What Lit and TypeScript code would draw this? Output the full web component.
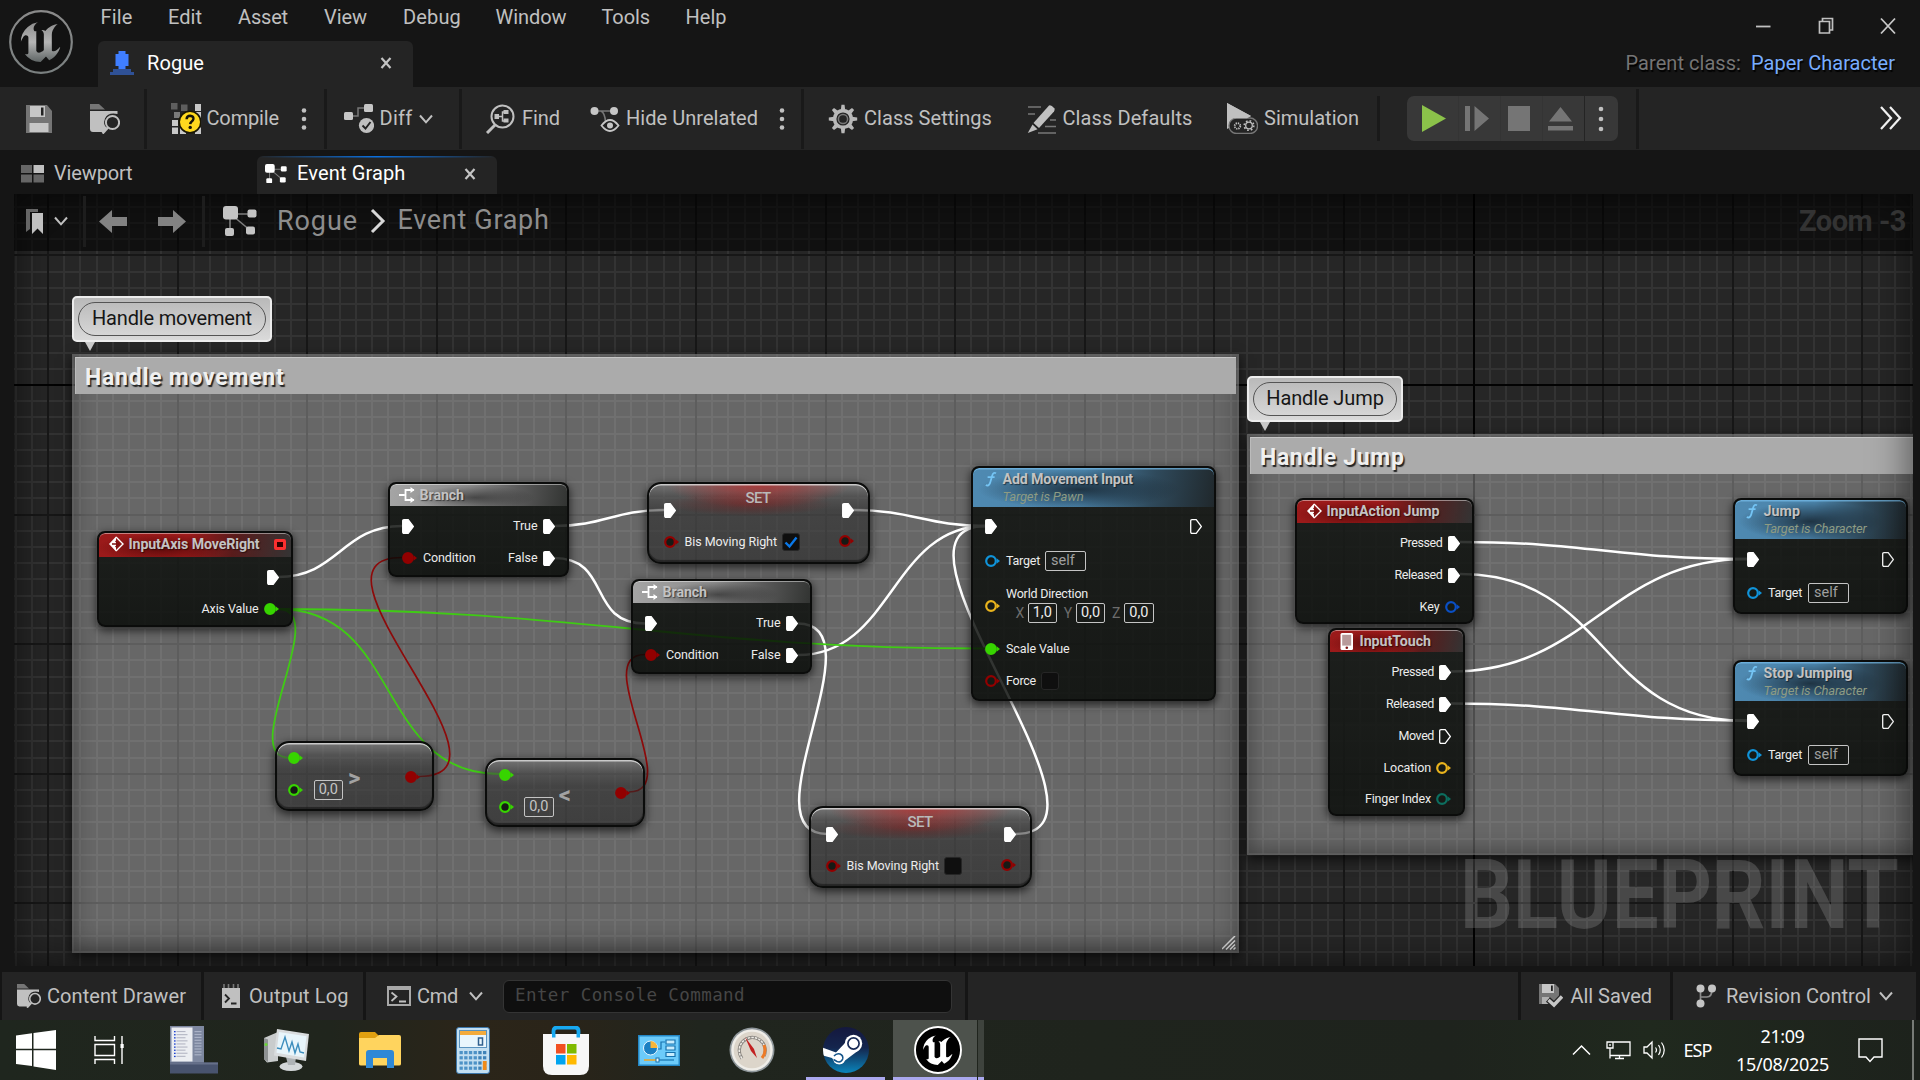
import { LitElement, html, svg, css, nothing } from "lit";
import { customElement, property } from "lit/decorators.js";

/* Text whose tracking is adjusted so that it fills a given width. */
@customElement("fit-label")
class FitLabel extends LitElement {
  @property({ type: Number }) w = 0;
  static styles = css`
    :host { display: inline-block; white-space: nowrap; flex: none; }
  `;
  render() {
    return html`<span><slot></slot></span>`;
  }
  firstUpdated() {
    this.style.width = this.w + "px";
    const span = this.renderRoot.querySelector("span") as HTMLElement;
    const n = (this.textContent || "").trim().length;
    const natural = span.getBoundingClientRect().width;
    if (n > 0 && natural > 0) span.style.letterSpacing = (this.w - natural) / n + "px";
  }
}

const L = (t: string, w: number, cls = "") => html`<fit-label class=${cls} w=${w}>${t}</fit-label>`;

/* ---------- icons ---------- */
const icon = (w: number, h: number, body: unknown, cls = "") =>
  html`<svg class="ic ${cls}" width=${w} height=${h} viewBox="0 0 ${w} ${h}">${body}</svg>`;

const U_PATH =
  "M19.13 13.729c-.206.997-1.126 3.557-4.06 4.942l-1.179-1.325-1.988 2a7.338 7.338 0 01-5.804-2.978 2.859 2.859 0 00.65.123c.326.006.678-.114.678-.66v-5.394a.89.89 0 00-1.116-.89c-.92.212-1.656 2.509-1.656 2.509a7.304 7.304 0 012.528-5.597 7.408 7.408 0 013.73-1.721c-1.006.573-1.57 1.507-1.57 2.29 0 1.262.76 1.109.984.923v7.28a1.157 1.157 0 00.148.256 1.075 1.075 0 00.88.445c.76 0 1.747-.868 1.747-.868V9.172c0-.6-.452-1.324-.905-1.572 0 0 .838-.149 1.484.346a5.537 5.537 0 01.387-.425c1.508-1.48 2.929-1.902 4.112-2.112 0 0-2.151 1.69-2.151 3.96 0 1.687.043 5.801.043 5.801.799.771 1.986-.342 3.059-1.441Z";

const engineLogo = html`<svg class="ic" width="66" height="66" viewBox="0 0 66 66">
  <defs>
    <linearGradient id="lg" x1="0" y1="0" x2="0" y2="1"><stop offset="0" stop-color="#8d8d8d"/><stop offset=".5" stop-color="#b5b5b5"/><stop offset="1" stop-color="#5f6565"/></linearGradient>
    <linearGradient id="lr" x1="0" y1="0" x2="0" y2="1"><stop offset="0" stop-color="#8a8a8a"/><stop offset="1" stop-color="#7a8080"/></linearGradient>
  </defs>
  <circle cx="33" cy="33" r="30.8" fill="#121212" stroke="url(#lr)" stroke-width="2.2"/>
  <g transform="translate(.2,.4) scale(2.72)"><path d=${U_PATH} fill="url(#lg)"/></g>
</svg>`;

const dots = (gap: number) => icon(6, 30, [-1, 0, 1].map((i) => svg`<circle cx="3" cy=${15 + i * gap} r="2.3" fill="#c0c0c0"/>`));
const chevron = icon(16, 12, svg`<path d="M2 2.5L8 9.3L14 2.5" fill="none" stroke="#c0c0c0" stroke-width="2"/>`);
const cross = icon(12, 14, svg`<path d="M1.5 2L10.5 12M10.5 2L1.5 12" stroke="#c4c4c4" stroke-width="2.2"/>`);
const save = icon(26, 28, svg`<path d="M0 0H21L26 6V28H0Z" fill="#757575"/><path d="M4 1H19V12H4Z" fill="#c6c6c6"/><path d="M15 2.500H17.500V10.500H15Z" fill="#222"/><path d="M3.500 18H22.500V27H3.500Z" fill="#c6c6c6"/>`);
const folderFind = (w: number, h: number) => html`<svg class="ic" width=${w} height=${h} viewBox="0 0 30 30">
  <path d="M0 0H9L15 5.500H0Z" fill="#757575"/><path d="M0 7H27.500V10Q18 8 15 14.500Q12.500 21 17 24L14 28H3Q0 28 0 25Z" fill="#c0c0c0"/>
  <circle cx="22.500" cy="18.500" r="6.600" fill="none" stroke="#c0c0c0" stroke-width="2"/><path d="M18 23.500L12.500 29.500" stroke="#c0c0c0" stroke-width="2.400"/></svg>`;
const compile = icon(30, 31, svg`
  <path d="M0 0H6.500V6.500H0Z" fill="#5e5e5e"/><path d="M10 1.500H16.500V8H10Z" fill="#5e5e5e"/><path d="M24 1H30V8H24Z" fill="#c8c8c8"/>
  <path d="M3 9H9V15H3Z" fill="#7a7a7a"/><path d="M24 9H30V15H24Z" fill="#c8c8c8"/><path d="M1 17H7V23H1Z" fill="#c8c8c8"/><path d="M1 24.500H7V31H1ZM9 24.500H15V31H9ZM24 24.500H30V31H24Z" fill="#c8c8c8"/>
  <circle cx="19" cy="19" r="10.800" fill="#ffd91e" stroke="#1a1704" stroke-width="1.600"/>
  <path d="M15.600 16.200Q15.800 12.800 19.200 12.800Q22.500 13 22.400 15.900Q22.200 17.600 20.500 18.700Q19.300 19.600 19.200 21.200" fill="none" stroke="#15130a" stroke-width="2.500"/><circle cx="19.200" cy="24.400" r="1.700" fill="#15130a"/>`);
const diff = icon(30, 31, svg`
  <path d="M8 13H14V5H21" fill="none" stroke="#777" stroke-width="1.500"/><rect x="0" y="9" width="9" height="8" rx="1.500" fill="#c6c6c6"/><rect x="20" y="1" width="9" height="8" rx="1.500" fill="#c6c6c6"/>
  <circle cx="22.500" cy="22.500" r="7.600" fill="#c0c0c0"/><path d="M18.500 22.500L21.500 25.500L26.500 19" fill="none" stroke="#222" stroke-width="1.900"/>`);
const find = icon(30, 30, svg`
  <circle cx="17.500" cy="12.500" r="11" fill="none" stroke="#c0c0c0" stroke-width="2"/><path d="M10 21L2 29" stroke="#c0c0c0" stroke-width="3"/>
  <rect x="9.500" y="10" width="4.500" height="5" fill="#c0c0c0"/><path d="M13 12.500H17.500M23 8H17.500V17H23" fill="none" stroke="#c0c0c0" stroke-width="1.500"/><rect x="18.500" y="6" width="5" height="4" fill="#c0c0c0"/><rect x="18.500" y="14.500" width="5" height="4" fill="#c0c0c0"/>`);
const hide = icon(30, 28, svg`
  <path d="M4 6H24M11 6Q15 8 15.500 17" fill="none" stroke="#777" stroke-width="1.600"/><circle cx="4.500" cy="6" r="4" fill="#c6c6c6"/><circle cx="24" cy="6" r="4" fill="#c6c6c6"/>
  <path d="M11.500 20.500Q20 9.500 28.500 20.500Q20 31.500 11.500 20.500Z" fill="#222" stroke="#c6c6c6" stroke-width="1.800"/><circle cx="20" cy="20.500" r="3" fill="#c6c6c6"/>`);
const gear = icon(30, 30, svg`
  ${[0, 45, 90, 135, 180, 225, 270, 315].map((a) => svg`<path d="M12.800 6L13.500 .8H16.500L17.200 6Z" fill="#b8b8b8" transform="rotate(${a} 15 15)"/>`)}
  <circle cx="15" cy="15" r="8.400" fill="none" stroke="#b8b8b8" stroke-width="3.600"/><circle cx="15" cy="15" r="4.600" fill="none" stroke="#777" stroke-width="1.500"/>`);
const pencil = icon(30, 30, svg`
  <path d="M1 3H14M1 10H8M23 16H29M18 22.500H29M11 29H29" stroke="#777" stroke-width="1.500"/>
  <path d="M22 1.500Q24 .5 27.500 4.500Q28 6 27 7.500L12 24L6.500 19Z" fill="#c0c0c0"/><path d="M5.500 20.500L10.500 25.200L.8 29Z" fill="#c0c0c0"/>`);
const simulate = icon(31, 31, svg`
  <path d="M0 0L24 13L0 26Z" fill="#c0c0c0"/><rect x="2" y="15" width="28.500" height="15.500" rx="7.500" fill="#242424" stroke="#777" stroke-width="1.400"/>
  <path d="M0 0L24 13L20 15.200H6L1 19L0 22Z" fill="#c0c0c0"/>
  <circle cx="10.500" cy="23" r="2.800" fill="none" stroke="#c0c0c0" stroke-width="1.800" stroke-dasharray="1.300 .9"/><circle cx="22" cy="22.500" r="3.300" fill="none" stroke="#c0c0c0" stroke-width="1.300"/><circle cx="22" cy="22.500" r="4.800" fill="none" stroke="#c0c0c0" stroke-width="1.600" stroke-dasharray="1.700 2.070"/>`);
const graphIcon = (s: number, c: string) => html`<svg class="ic" width=${s} height=${s * 0.9} viewBox="0 0 34 30.600">
  <path d="M8 8H28M7 10V26M10 10L28 25" stroke="#7d7d7d" stroke-width="1.600"/><rect x="0" y="0" width="15" height="13.500" rx="3" fill=${c}/><rect x="24.500" y="3.500" width="9" height="8" rx="2" fill=${c}/><rect x="2" y="22" width="9" height="8" rx="2" fill=${c}/><rect x="23" y="20.500" width="9" height="8" rx="2" fill=${c}/></svg>`;

/* ---------- node data ---------- */
type Pin = { kind: "exec" | "data" | "none"; color?: string; filled?: boolean; label?: string; w?: number; h?: number; extra?: unknown };
type Node = { x: number; y: number; w: number; h: number; style: string; title: string; tw: number; sub?: string; sw?: number; glyph?: string; head?: number; left: Pin[]; right: Pin[]; delegate?: boolean };

const RED = "#920000", GREEN = "#37d400", CYAN = "#1093d9", GOLD = "#e9b31d";

const check = (on: boolean) => html`<span class="check">${on ? icon(16, 16, svg`<path d="M2.500 8.500L6.500 12.500L13.500 3.500" fill="none" stroke="#0a78e8" stroke-width="2.400"/>`) : nothing}</span>`;
const self = html`<span class="box self">self</span>`;
const num = (v: string) => html`<span class="box num">${v}</span>`;
const E: Pin = { kind: "exec", filled: true };
const out = (label: string, w: number, filled = true): Pin => ({ kind: "exec", filled, label, w });
const target: Pin = { kind: "data", color: CYAN, label: "Target", w: 34, h: 36, extra: self };
const setNode = (x: number, y: number, on: boolean): Node => ({
  x, y, w: 223, h: 81.5, style: "compact set", title: "SET", tw: 25,
  left: [E, { kind: "data", color: RED, label: "Bis Moving Right", w: 92.5, extra: check(on) }],
  right: [E, { kind: "data", color: RED, h: 29 }],
});
const branch = (x: number, y: number): Node => ({
  x, y, w: 181, h: 95, style: "flow", title: "Branch", tw: 44.5, glyph: "branch", head: 24,
  left: [E, { kind: "data", color: RED, filled: true, label: "Condition", w: 52.5 }],
  right: [out("True", 24.5), out("False", 29.5)],
});

const nodes: Node[] = [
  { x: 96.5, y: 531, w: 196, h: 96, style: "event", title: "InputAxis MoveRight", tw: 131, glyph: "event", head: 26, delegate: true, left: [], right: [E, { kind: "data", color: GREEN, filled: true, label: "Axis Value", w: 57 }] },
  branch(387.5, 482), branch(630.5, 579),
  setNode(646.500, 482, true), setNode(808.5, 806, false),
  {
    x: 970.5, y: 466, w: 245, h: 235, style: "func wide", title: "Add Movement Input", tw: 130.500, sub: "Target is Pawn", sw: 81, glyph: "f", head: 40.500,
    left: [E, { ...target, h: 37 },
      { kind: "data", color: GOLD, h: 53, extra: html`<span class="vec">${L("World Direction", 82)}<span class="vrow"><i>X</i>${num("1,0")}<i>Y</i>${num("0,0")}<i>Z</i>${num("0,0")}</span></span>` },
      { kind: "data", color: GREEN, filled: true, label: "Scale Value", w: 63.500 },
      { kind: "data", color: RED, label: "Force", w: 30, extra: check(false) }],
    right: [out("", 0, false)],
  },
  { x: 274.5, y: 741, w: 159.500, h: 69.500, style: "compact op", title: ">", tw: 0, left: [{ kind: "data", color: GREEN, filled: true }, { kind: "data", color: GREEN, extra: num("0,0") }], right: [{ kind: "data", color: RED, filled: true }] },
  { x: 485, y: 757.500, w: 159.500, h: 69, style: "compact op", title: "<", tw: 0, left: [{ kind: "data", color: GREEN, filled: true }, { kind: "data", color: GREEN, extra: num("0,0") }], right: [{ kind: "data", color: RED, filled: true }] },
  { x: 1294.500, y: 498, w: 179, h: 126, style: "event", title: "InputAction Jump", tw: 113, glyph: "event", head: 25, left: [], right: [out("Pressed", 42.500), out("Released", 48), { kind: "data", color: "#0a4fc4", label: "Key", w: 20 }] },
  { x: 1327.500, y: 628, w: 137.500, h: 188, style: "event", title: "InputTouch", tw: 71.500, glyph: "phone", head: 24, left: [], right: [out("Pressed", 42.500), out("Released", 48), out("Moved", 35.500, false), { kind: "data", color: GOLD, label: "Location", w: 47.500 }, { kind: "data", color: "#0c6e5f", label: "Finger Index", w: 66, h: 29 }] },
  { x: 1732.500, y: 498, w: 175.500, h: 116, style: "func", title: "Jump", tw: 36.500, sub: "Target is Character", sw: 103, glyph: "f", head: 41, left: [E, target], right: [out("", 0, false)] },
  { x: 1732.500, y: 660, w: 175.500, h: 116, style: "func", title: "Stop Jumping", tw: 89, sub: "Target is Character", sw: 103, glyph: "f", head: 41, left: [E, target], right: [out("", 0, false)] },
];

/* from x, from y, to x, to y, tangent length, colour class */
const wires: [number, number, number, number, number, string][] = [
  [278, 577, 402, 526, 60, "w"], [554, 526, 664, 510, 50, "w"], [554, 558, 645, 623.500, 58, "w"],
  [853, 510, 986, 526, 60, "w"], [798, 655, 986, 526, 95, "w"], [798, 623.500, 827, 834, 83, "w"], [1015, 834, 986, 526, 123, "w"],
  [278, 609, 986, 648.500, 300, "g"], [278, 609, 290, 758, 55, "g"], [278, 609, 500, 774, 125, "g"],
  [419, 776.500, 402, 557.500, 113, "r"], [629, 792, 645, 654.500, 57, "r"],
  [1460, 542, 1747, 559, 130, "w"], [1460, 574, 1747, 721, 150, "w"], [1451, 671.500, 1747, 559, 138, "w"], [1451, 703.500, 1747, 720.500, 130, "w"],
];

const STEP = 16.2, OX = 1473.6, OY = 385;
const gridLines = () => {
  const minor: unknown[] = [], major: unknown[] = [];
  for (let i = -91; i <= 28; i++) {
    const x = Math.round(OX + i * STEP) - 1, m = i % 8 === 0;
    (m ? major : minor).push(svg`<rect class=${i === 0 ? "ax" : m ? "mj" : "mn"} x=${x} y="190" width="2" height="780"/>`);
  }
  for (let i = -12; i <= 36; i++) {
    const y = Math.round(OY + i * STEP) - 1, m = i % 8 === 0;
    (m ? major : minor).push(svg`<rect class=${i === 0 ? "ax" : m ? "mj" : "mn"} x="10" y=${y} width="1910" height="2"/>`);
  }
  return [minor, major];
};

const pinShape = (p: Pin) =>
  p.kind === "exec"
    ? html`<svg class="ic" width="12" height="15" viewBox="0 0 12 15"><path d="M.7 2Q.7 .7 2 .7H6.200L11.400 7.500L6.200 14.300H2Q.7 14.300 .7 13Z" fill=${p.filled ? "#fff" : "none"} stroke="#fff" stroke-width="1.300"/></svg>`
    : html`<svg class="ic" width="15" height="14" viewBox="0 0 15 14"><circle cx="6" cy="7" r="4.800" fill=${p.filled ? p.color : "#161a15"} stroke=${p.color} stroke-width="2.200"/><path d="M11.600 4.200L15 7L11.600 9.800Z" fill=${p.color}/></svg>`;

const glyphs: Record<string, unknown> = {
  event: icon(16, 16, svg`<path d="M8 .5L1 8L8 15.500Z" fill="#fff"/><path d="M8 1L15 8L8 15" fill="none" stroke="#fff" stroke-width="1.400"/><path d="M4 8H9M7.500 5L10.800 8L7.500 11" fill="none" stroke="#7c1010" stroke-width="1.400"/>`),
  phone: icon(16, 17, svg`<rect x="1.500" y="0" width="12.500" height="17" rx="1.500" fill="#fff"/><rect x="3.200" y="1.800" width="9" height="10.800" fill="#b79a9a"/><circle cx="7.800" cy="14.800" r="1.300" fill="#7c1010"/>`),
  branch: icon(16, 16, svg`<path d="M0 8H5.500M15 3H6.500V13H15" fill="none" stroke="#fff" stroke-width="1.800"/><path d="M11.500 0L15.500 3L11.500 6ZM11.500 10L15.500 13L11.500 16Z" fill="#fff"/>`),
  f: icon(12, 16, svg`<path d="M11 2.200Q8.600 .8 7.300 4.200L5 12.200Q3.600 15.600 .8 14M2.600 6.200H9.600" fill="none" stroke="#74c4f4" stroke-width="1.800"/>`),
};

@customElement("bp-node")
class BpNode extends LitElement {
  @property({ attribute: false }) node!: Node;
  static styles = css`
    :host { display: block; font: 12.5px/16px Roboto, sans-serif; color: #ececec; }
    .ic { display: block; flex: none; }
    .node { box-sizing: border-box; width: 100%; height: 100%; border-radius: 8px; border: 2px solid #0b0c0b; background: linear-gradient(180deg, rgba(14,17,14,.84), rgba(4,7,4,.82)); box-shadow: 0 3px 8px 1px rgba(0,0,0,.6); overflow: hidden; display: flex; flex-direction: column; position: relative; }
    .head { box-sizing: border-box; display: flex; padding: 3px 5px 0 9px; gap: 5px; flex: none; box-shadow: inset 0 1px 0 rgba(255,255,255,.45); border-radius: 6px 6px 0 0; }
    .txt { display: flex; flex-direction: column; flex: 1; gap: 1px; }
    .title { font: bold 14.200px/16px Roboto, sans-serif; color: #c3c3c3; text-shadow: 1px 1px 1px rgba(0,0,0,.5); }
    .sub { font: italic 13px/18px Roboto, sans-serif; color: #8d9b83; }
    .event .head { background: radial-gradient(ellipse 34% 60% at 33% 62%, rgba(70,5,5,.75), transparent), linear-gradient(100deg, #9a1a1a 0%, #a01b1b 45%, rgba(96,28,28,.9) 70%, #343434 100%); }
    .flow .head { background: radial-gradient(ellipse 34% 55% at 48% 62%, rgba(30,30,30,.6), transparent), linear-gradient(100deg, #a5a5a5 0%, #8a8a8a 45%, #5a5a5a 72%, #323432 100%); }
    .func .head { padding-left: 11px; gap: 6px; background: radial-gradient(ellipse 42% 50% at 44% 55%, rgba(20,32,42,.8), transparent), linear-gradient(100deg, #4f8ab2 0%, #4a82a8 45%, #2f4a5c 74%, #20282c 100%); box-shadow: inset 0 1.500px 0 rgba(120,190,235,.7); }
    .wide .head { padding-left: 12px; }
    .dlg { box-sizing: border-box; width: 11.500px; height: 11.500px; border: 3px solid #fb2f2f; border-radius: 2px; background: #300; margin-top: 2.500px; }
    .cols { display: flex; justify-content: space-between; padding: 4px 12px 0 12.500px; }
    .col { display: flex; flex-direction: column; }
    .row { display: flex; align-items: center; height: 32px; gap: 6px; }
    .right .row { justify-content: flex-end; gap: 5px; }
    .box { box-sizing: border-box; border: 1.500px solid #c4c4c4; border-radius: 2px; height: 20px; font-size: 14.500px; line-height: 17px; color: #c4c4c4; }
    .self { width: 41px; padding-left: 5px; color: #9f9f9f; }
    .wide .self { margin-left: -1px; }
    .num { width: 29.500px; text-align: center; }
    .check { width: 16px; height: 16px; background: #0f0f0f; border: 1px solid #262626; border-radius: 3px; margin-left: -1.500px; }
    .vec { display: flex; flex-direction: column; gap: 1px; height: 45px; margin-top: 4px; }
    .vrow { display: flex; align-items: center; padding-left: 9.500px; }
    .vrow i { font-style: normal; color: #6d6d6d; font-size: 14px; width: 12px; }
    .vrow .box { margin-right: 6.800px; color: #ececec; }
    .compact { border-radius: 14px; background: linear-gradient(180deg, rgba(120,120,120,.75) 0, rgba(70,70,70,.6) 12px, rgba(40,40,40,.56) 26px, rgba(36,36,36,.6) 100%); box-shadow: 0 3px 8px 1px rgba(0,0,0,.6), inset 0 1.500px 0 rgba(230,230,230,.75), inset 0 -2px 1px rgba(0,0,0,.4); display: grid; }
    .set { background: radial-gradient(ellipse 42% 24px at 50% 0, rgba(190,40,40,.75), transparent), radial-gradient(ellipse 38% 12px at 46% 20px, rgba(120,25,25,.5), transparent), linear-gradient(180deg, rgba(120,120,120,.75) 0, rgba(70,70,70,.6) 12px, rgba(40,40,40,.56) 26px, rgba(36,36,36,.6) 100%); }
    .compact .cols, .compact .mid { grid-area: 1 / 1; }
    .compact .mid { justify-self: center; font: 500 15px/18px Roboto, sans-serif; color: #b9b9b9; padding-top: 5px; }
    .set .cols { padding: 10px 14px 0 15px; }
    .set .row { height: 32px; }
    .op .cols { margin-top: -1px; padding: 0 12.500px 0 11.500px; }
    .op .mid { font: bold 24px/22px Roboto, sans-serif; color: #a2a2a2; padding-top: 24px; }
    .op .left .row { gap: 10.500px; }
    .op .right { padding-top: 18.500px; }
  `;
  pin(p: Pin, right: boolean) {
    const label = p.label ? L(p.label, p.w || 0) : nothing;
    return html`<div class="row" style=${p.h ? `height:${p.h}px` : nothing}>${right ? [label, pinShape(p)] : [pinShape(p), label, p.extra ?? nothing]}</div>`;
  }
  render() {
    const n = this.node;
    const compact = n.style.startsWith("compact");
    return html`<div class="node ${n.style}">
      ${compact
        ? html`<div class="mid">${n.tw ? L(n.title, n.tw) : n.title}</div>`
        : html`<div class="head" style="height:${(n.head || 24) - 2}px">${glyphs[n.glyph || "f"]}
            <div class="txt">${L(n.title, n.tw, "title")}${n.sub ? L(n.sub, n.sw || 0, "sub") : nothing}</div>
            ${n.delegate ? html`<span class="dlg"></span>` : nothing}</div>`}
      <div class="cols"><div class="col left">${n.left.map((p) => this.pin(p, false))}</div><div class="col right">${n.right.map((p) => this.pin(p, true))}</div></div>
    </div>`;
  }
}

/* ---------- taskbar icons ---------- */
const winIcon = icon(40, 40, svg`<path d="M0 5.500L16 3.200V18.800H0ZM17.500 3L40 0V18.800H17.500ZM0 20.200H16V36L0 34ZM17.500 20.200H40V40L17.500 36.500Z" fill="#fff"/>`);
const taskView = icon(30, 28, svg`<path d="M1 0V4.500H20.500V0M1 28V23.500H20.500V28M1 8.500H20.500V19.500H1ZM28 0V28" fill="none" stroke="#fff" stroke-width="1.400"/><rect x="26.500" y="8" width="3.200" height="4" fill="#fff"/>`);
const server = icon(48, 48, svg`<rect x="0" y="0" width="34" height="37" fill="#7e88a0"/><rect x="1.500" y="1.500" width="21" height="34" fill="#eceef2"/>${[0, 1, 2, 3, 4, 5, 6, 7, 8].map((i) => svg`<rect x="4" y=${5 + i * 3.1} width="1.600" height="1.300" fill="#1a3fd0"/><rect x="6.500" y=${5 + i * 3.1} width=${i % 2 ? 11 : 9} height="1.100" fill="#b4b6c4"/>`)}${[0, 1, 2, 3, 4, 5, 6, 7, 8].map((i) => svg`<rect x="24.500" y=${5 + i * 2.9} width="7" height="1.200" fill="#aab2c6"/>`)}<rect x="0" y="36.500" width="48" height="11" fill="#48536e"/><rect x="0" y="36.500" width="48" height="2" fill="#66708a"/>`);
const monitor = icon(46, 42, svg`<path d="M0 9L14 3V32L3 33.500L0 30Z" fill="#c9cccd"/><path d="M0 9L4 10.500V33L0 30Z" fill="#8e9293"/><circle cx="2" cy="15.500" r="1.600" fill="#6ad436"/><ellipse cx="27" cy="37.500" rx="11.500" ry="4.500" fill="#d3d7d9"/><path d="M22 28H32L31 36H24Z" fill="#aeb3b6"/><path d="M13 0L45 5L42 32L10 26.500Z" fill="#d9dcde"/><path d="M15 3L42.500 7.300L40 28.500L12.500 23.800Z" fill="#e8f5fb"/><path d="M13 19L17 20L21 8L25 22L28 13L31 24L34 15L36 23L40 24" fill="none" stroke="#3c8dbd" stroke-width="1.400"/>`);
const folder = icon(42, 36, svg`<path d="M0 2Q0 0 2 0H16L20 4V8H0Z" fill="#e0a010"/><path d="M0 6H16L20 3H40Q42 3 42 5V32Q42 33.500 40 33.500H2Q0 33.500 0 32Z" fill="#ffd45e"/><path d="M7 36V21Q7 18 10 18H32Q35 18 35 21V36H28V26H14V36Z" fill="#2f88d6"/>`);
const calc = icon(34, 47, svg`<rect x=".5" y=".5" width="33" height="46" rx="2.500" fill="#c3dff1" stroke="#3c76a8"/><rect x="3.500" y="3.500" width="27" height="17" fill="#e9f6fd" stroke="#5a93bf"/><rect x="4" y="4" width="26" height="4" fill="#f3ab3c"/><rect x="22.500" y="11" width="4" height="7" fill="none" stroke="#30608e" stroke-width="1.500"/>${[0, 1, 2, 3].map((r) => [0, 1, 2, 3, 4, 5].map((c) => svg`<rect x=${3.5 + c * 4.7} y=${24 + r * 5.2} width="3.300" height="3.200" fill=${c > 3 ? "#3f83b8" : "#4d92c6"}/>`))}<rect x="26.800" y="34" width="3.800" height="9" fill="#f08b1a"/>`);
const store = icon(46, 49, svg`<path d="M10.500 11V5Q10.500 1.500 14 1.500H32Q35.500 1.500 35.500 5V11" fill="none" stroke="#18a9f0" stroke-width="3.800"/><path d="M0 8H46V40Q46 49 37 49H9Q0 49 0 40Z" fill="#f7f7f7"/><path d="M9 8H12.500V11.500H9ZM33.500 8H37V11.500H33.500Z" fill="#18a9f0"/><rect x="13" y="18" width="9.500" height="9.500" fill="#f25022"/><rect x="24" y="18" width="9.500" height="9.500" fill="#7fba00"/><rect x="13" y="29" width="9.500" height="9.500" fill="#00a4ef"/><rect x="24" y="29" width="9.500" height="9.500" fill="#ffb900"/>`);
const control = icon(42, 31, svg`<rect x="0" y="0" width="42" height="31" fill="#2386c4"/><rect x="1.500" y="1.500" width="39" height="28" fill="#6ccbfa"/><circle cx="12.500" cy="13" r="7" fill="#1b7fc2" stroke="#e8f7ff" stroke-width="1"/><path d="M12.500 13V6A7 7 0 0 1 19.500 13Z" fill="#f6b63a"/><path d="M20 14H23V7H27" fill="none" stroke="#1672ae" stroke-width="1.200"/><path d="M28 5H37V9H28ZM28 11H37V15H28ZM28 17.500H37V21.500H28Z" fill="#c7ecfd" stroke="#1672ae" stroke-width="1.200"/><path d="M6 25H18" stroke="#f2a51f" stroke-width="1.500"/><path d="M20 25H36" stroke="#1672ae" stroke-width="1.200"/><rect x="18" y="23" width="3" height="4" fill="#eaf8ff" stroke="#1672ae"/>`);
const gauge = icon(46, 46, svg`<circle cx="23" cy="23" r="22.500" fill="#8f979b"/><circle cx="23" cy="23" r="20.800" fill="#efede8"/><circle cx="23" cy="23" r="18.300" fill="#dcd5ca"/><path d="M13 31.500A13 13 0 1 1 35 29" fill="none" stroke="#8a8680" stroke-width="3.200"/><path d="M13 31.500A13 13 0 1 1 35 29" fill="none" stroke="#efece6" stroke-width="1.500" stroke-dasharray="2.500 1"/><path d="M35 18A13 13 0 0 1 33 31" fill="none" stroke="#ee7b26" stroke-width="3"/><path d="M16 10L25 22L28 31L22 24Z" fill="#c22020"/>`);
const steam = html`<svg class="ic" width="46" height="46" viewBox="0 0 46 46"><defs><linearGradient id="st" x1="0" y1="0" x2="0" y2="1"><stop offset="0" stop-color="#14183e"/><stop offset=".45" stop-color="#14254d"/><stop offset="1" stop-color="#0a85bb"/></linearGradient><clipPath id="sc"><circle cx="23" cy="23" r="23"/></clipPath></defs>
  <circle cx="23" cy="23" r="23" fill="url(#st)"/><g clip-path="url(#sc)"><path d="M-2 20L13 25.500L22 16L36 23L22 33.500Q20 38 15 37L9 31L-2 28Z" fill="#fff"/><circle cx="30.500" cy="16.500" r="8.700" fill="#fff"/><circle cx="30.500" cy="16.500" r="5.600" fill="none" stroke="#1b2c57" stroke-width="1.700"/><circle cx="16" cy="31" r="6.300" fill="#fff"/><path d="M11 29Q13.500 26 17 27Q20.500 28.500 19.700 32Q18 36 14 34.500L10.500 32.500" fill="none" stroke="#15558a" stroke-width="1.500"/></g></svg>`;
const ueTask = icon(48, 48, svg`<circle cx="24" cy="24" r="23" fill="#000" stroke="#fff" stroke-width="1.900"/><g transform="translate(-.3,0) scale(2.020)"><path d=${U_PATH} fill="#fff"/></g>`);

@customElement("app-root")
class AppRoot extends LitElement {
  static styles = css`
    :host { display: flex; flex-direction: column; width: 1920px; height: 1080px; overflow: hidden; background: #151515; color: #c0c0c0; font: 20px/24px Roboto, sans-serif; }
    .ic { display: block; flex: none; }
    .top { display: flex; height: 87px; }
    .logo { width: 98px; padding: 8.500px 0 0 8px; box-sizing: border-box; }
    .topmid { display: flex; flex-direction: column; width: 1400px; }
    .menu { display: grid; grid-template-columns: 67.500px 70px 86px 79px 92.500px 106px 84px 60px; padding: 5px 0 0 2.500px; height: 41px; box-sizing: border-box; }
    .tab { box-sizing: border-box; display: flex; align-items: center; width: 315px; height: 46px; background: #242424; border-radius: 6px 6px 0 0; padding: 0 21px 2px 12px; color: #fff; }
    .tab .ic:first-child { margin-right: 13px; }
    .push { flex: 1; }
    .topright { flex: 1; display: flex; flex-direction: column; align-items: flex-end; padding-right: 25px; }
    .winbtns { display: flex; align-items: center; gap: 46.500px; height: 51px; margin-right: -1px; }
    .parent { display: flex; gap: 10px; color: #757575; text-shadow: 1px 2px 1px #000; }
    .parent b { font-weight: 400; color: #78adff; }
    .tools { display: flex; height: 63px; background: #242424; align-items: center; }
    .tools fit-label { margin-top: -2px; }
    .grp { box-sizing: border-box; display: flex; align-items: center; height: 60px; border-right: 3px solid #191919; gap: 6px; }
    .ga { width: 147px; padding-left: 26px; gap: 38px; }
    .gb { width: 180px; padding-left: 24px; gap: 5.500px; }
    .gb > :last-child { margin-left: 16px; }
    .gc { width: 135px; padding-left: 17px; gap: 5.500px; }
    .gd { width: 342px; padding-left: 23px; }
    .gd > :nth-child(2) { margin-left: 1px; }
    .gd > :nth-child(3) { margin-left: 24px; }
    .gd > :last-child { margin-left: 14.500px; }
    .ge { width: 576px; height: 45px; padding-left: 24px; }
    .ge > :nth-child(3) { margin-left: 28.500px; }
    .ge > :nth-child(5) { margin-left: 28.500px; }
    .gf { width: 259px; padding-left: 27px; }
    .cluster { display: flex; width: 211px; height: 45px; background: #383838; border-radius: 7px; overflow: hidden; }
    .cluster span { box-sizing: border-box; display: flex; align-items: center; justify-content: center; width: 42px; padding-right: 5px; border-right: 1px solid #343434; flex: none; }
    .cluster span:first-child { width: 51.500px; padding: 0 0 0 3px; }
    .cluster span:nth-child(4) { border-right: 1.500px solid #242424; }
    .cluster span:last-child { width: 33px; border: 0; padding: 0; }
    .more { margin: 0 17px 2px auto; }
    .tabs { display: flex; height: 44px; align-items: flex-end; }
    .vp { box-sizing: border-box; width: 257px; height: 38px; padding-left: 21px; display: flex; align-items: center; gap: 10px; padding-bottom: 3px; }
    .eg { box-sizing: border-box; width: 240px; height: 38px; display: flex; align-items: center; background: linear-gradient(90deg, transparent, #0a70e0 50%, transparent) top/100% 1.500px no-repeat, #242424; border-radius: 6px 6px 0 0; padding: 0 21px 3px 8px; gap: 10px; color: #fff; }
    .tabs fit-label { margin-top: -2px; }
    .graph { position: relative; margin-left: 14px; width: 1899px; height: 772px; overflow: hidden; background: #262626; }
    .stage { position: absolute; left: -14px; top: -194px; width: 1920px; height: 1080px; }
    .lines, .wires { position: absolute; left: 0; top: 0; }
    .mn { fill: #333; } .mj { fill: #171717; } .ax { fill: #020202; }
    .wires path { fill: none; }
    .w { stroke: #fff; stroke-width: 2.500; } .g { stroke: #3fcb14; stroke-width: 1.800; } .r { stroke: #8d0a0a; stroke-width: 1.700; }
    .vignette { position: absolute; inset: 0; box-shadow: inset 0 0 42px rgba(0,0,0,.6); }
    .comment { position: absolute; box-sizing: border-box; background: rgba(255,255,255,.3); padding: 3px; box-shadow: inset 0 0 0 2px rgba(110,110,110,.35), inset 0 -3px 22px rgba(0,0,0,.38), 0 4px 12px rgba(0,0,0,.7); }
    .c1 { left: 72px; top: 354px; width: 1167px; height: 599px; }
    .c2 { left: 1247px; top: 434px; width: 680px; height: 421px; }
    .chead { box-sizing: border-box; height: 37px; background: #ababab; border-top: 1.500px solid #c6c6c6; border-left: 1px solid #bbb; padding: 6px 0 0 9px; font: bold 23px/27px Roboto, sans-serif; color: #f0f0f0; text-shadow: 1.500px 1.500px 1px #222; }
    .grip { position: absolute; right: 3px; bottom: 3px; }
    .bubble { position: absolute; box-sizing: border-box; height: 46px; border-radius: 5px; border: 2px solid #ececec; background: linear-gradient(#b9b9b9, #dadada); padding: 4px; }
    .bubble::after { content: ""; position: absolute; left: 11px; top: 44px; border: 5px solid transparent; border-top: 9px solid #c9c9c9; border-bottom: 0; }
    .pill { box-sizing: border-box; height: 34px; border: 1.800px solid #555; border-radius: 17px; display: flex; justify-content: center; align-items: center; color: #161616; line-height: 28px; padding-bottom: 2px; }
    .b1 { left: 72px; top: 296px; width: 200px; } .b2 { left: 1247px; top: 376px; width: 156px; }
    .mark { position: absolute; left: 1459.500px; top: 839px; font: bold 97px/112px Roboto, sans-serif; color: rgba(255,255,255,.16); transform-origin: 0 0; transform: scaleX(.858); white-space: nowrap; }
    bp-node { position: absolute; }
    .crumbs { position: relative; box-sizing: border-box; display: flex; align-items: center; height: 57px; padding: 0 7px 3px 12px; background: rgba(0,0,0,.56); color: #8d8d8d; font-size: 27px; line-height: 32px; }
    .crumbs .bar { width: 3px; height: 51px; background: #1d1d1d; }
    .crumbs .zoom { margin-left: auto; font-weight: bold; font-size: 29px; color: #333; }
    .last { margin-top: -2px; }
    .s1 { width: 9px; } .s2 { width: 13px; } .s3 { width: 14px; } .s4 { width: 31px; } .s5 { width: 15.500px; } .s6 { width: 18px; } .s7 { width: 20.500px; } .s8 { width: 12px; } .s9 { width: 11.500px; }
    .status { display: flex; height: 48px; margin-top: 6px; padding-left: 2px; gap: 3px; }
    .cell { box-sizing: border-box; display: flex; align-items: center; background: #242424; padding-bottom: 1px; }
    .k1 { width: 199px; padding-left: 15px; gap: 6px; } .k2 { width: 159px; padding-left: 18px; gap: 9px; } .k3 { width: 599px; padding-left: 21px; gap: 6px; }
    .k4 { width: 550px; } .k5 { width: 149px; padding-left: 18px; gap: 7.500px; } .k6 { width: 243px; padding-left: 23px; gap: 9px; }
    .k3 > :nth-child(3) { margin-left: 4px; }
    .k6 > :last-child { margin-left: -2px; }
    .cmd { box-sizing: border-box; width: 449px; height: 33px; margin: 1px 0 0 12.500px; background: #0f0f0f; border: 1.500px solid #343434; border-radius: 6px; padding-left: 11.500px; font: 17.500px/29px "DejaVu Sans Mono", monospace; color: #464646; }
    .task { display: flex; height: 60px; background: linear-gradient(90deg, #1f261e 0, #20251d 330px, #2b2519 470px, #2a2419 560px, #20251e 700px, #1f241d 1100px, #1e231d 1450px, #20291e 1650px, #1d221c); color: #fff; align-items: center; font: 18px/22px "Noto Sans", sans-serif; }
    .apps { display: grid; height: 60px; grid-template-columns: 72px 73px 98px 88px 98px 88px 98px 88px 98px 5px 79px 8px 84px 1px 6px; align-items: center; justify-items: center; }
    .run { align-self: stretch; justify-self: stretch; display: flex; justify-content: center; align-items: center; border-bottom: 3px solid #aaa8ee; box-sizing: border-box; padding-top: 3px; }
    .on { background: #4d524c; padding-left: 6px; } .stack { background: #3e433d; }
    .tray { display: flex; align-items: center; margin-left: auto; height: 60px; }
    .t1 { margin-right: 14.500px; } .t2 { margin-right: 12.500px; } .t3 { margin-right: 17.500px; } .t4 { margin-right: 24px; }
    .clock { display: flex; flex-direction: column; align-items: center; width: 94px; gap: 6px; margin-right: 28px; }
    .edge { width: 2px; height: 60px; background: #777b76; margin: 0 6px 0 29.500px; }
  `;

  render() {
    return html`
      <div class="top">
        <div class="logo">${engineLogo}</div>
        <div class="topmid">
          <div class="menu">${L("File", 32)}${L("Edit", 34)}${L("Asset", 50)}${L("View", 43)}${L("Debug", 58)}${L("Window", 71)}${L("Tools", 48.5)}${L("Help", 41)}</div>
          <div class="tab">${icon(24, 24, svg`<path d="M8.500 0H15.500V3H18.500V15H15.500V18H8.500V15H5.500V3H8.500Z" fill="#3f7eff"/><path d="M3 18H21V21H24V24H0V21H3Z" fill="#2f5196"/>`)}${L("Rogue", 57)}<span class="push"></span>${cross}</div>
        </div>
        <div class="topright">
          <div class="winbtns">
            ${icon(16, 18, svg`<path d="M1 9.500H15.500" stroke="#c0c0c0" stroke-width="1.800"/>`)}
            ${icon(16, 18, svg`<path d="M4.500 4V1.500H14.500V13H12M1.500 4.500H11.500V16H1.500Z" fill="none" stroke="#c0c0c0" stroke-width="1.700"/>`)}
            ${icon(16, 18, svg`<path d="M1 1.500L15 16.500M15 1.500L1 16.500" stroke="#c8c8c8" stroke-width="1.800"/>`)}
          </div>
          <div class="parent">${L("Parent class:", 115.5)}<b>${L("Paper Character", 144)}</b></div>
        </div>
      </div>

      <div class="tools">
        <div class="grp ga">${save}${folderFind(30, 30)}</div>
        <div class="grp gb">${compile}${L("Compile", 72.5)}${dots(8.5)}</div>
        <div class="grp gc">${diff}${L("Diff", 33)}${chevron}</div>
        <div class="grp gd">${find}${L("Find", 38)}${hide}${L("Hide Unrelated", 132)}${dots(8.5)}</div>
        <div class="grp ge">${gear}${L("Class Settings", 128)}${pencil}${L("Class Defaults", 130)}${simulate}${L("Simulation", 95)}</div>
        <div class="grp gf"><div class="cluster">
          <span>${icon(24, 27, svg`<path d="M0 0L24 13.500L0 27Z" fill="#8bc24a"/>`)}</span>
          <span>${icon(24, 25, svg`<path d="M0 0H5V25H0ZM9.500 0L24 12.500L9.500 25Z" fill="#757575"/>`)}</span>
          <span>${icon(22, 25, svg`<path d="M0 0H22V25H0Z" fill="#757575"/>`)}</span>
          <span>${icon(25, 24, svg`<path d="M12.500 0L24 14.500H1ZM0 19H25V23.500H0Z" fill="#757575"/>`)}</span>
          <span>${dots(10)}</span>
        </div></div>
        <div class="more">${icon(24, 26, svg`<path d="M2 2L12 13L2 24M11 2L21 13L11 24" fill="none" stroke="#f0f0f0" stroke-width="2.200"/>`)}</div>
      </div>

      <div class="tabs">
        <div class="vp">${icon(23, 18, svg`<path d="M0 0H11V8H0ZM0 9.500H11V17.500H0ZM12.500 9.500H23V17.500H12.500Z" fill="#666"/><path d="M12.500 0H23V8H12.500Z" fill="#c0c0c0"/>`)}${L("Viewport", 78.5)}</div>
        <div class="eg">${graphIcon(22, "#fff")}${L("Event Graph", 108.5)}<span class="push"></span>${cross}</div>
      </div>

      <div class="graph">
        <div class="stage">
          <svg class="lines" width="1920" height="1080" shape-rendering="crispEdges">${gridLines()}</svg>
          <div class="comment c1"><div class="chead">${L("Handle movement", 199.5)}</div>
            <svg class="grip" width="14" height="14" viewBox="0 0 14 14"><path d="M0 13L13 0M4 13.500L13 4.500M8 13.500L13 8.500M11.500 13.500L13.500 11.500" stroke="#d5d5d5" stroke-width="1.500"/></svg></div>
          <div class="comment c2"><div class="chead">${L("Handle Jump", 144.5)}</div></div>
          <div class="bubble b1"><div class="pill">${L("Handle movement", 160)}</div></div>
          <div class="bubble b2"><div class="pill">${L("Handle Jump", 117.5)}</div></div>
          <svg class="wires" width="1920" height="1080">${wires.map(([x1, y1, x2, y2, t, c]) => svg`<path class=${c} d="M${x1} ${y1}C${x1 + t} ${y1} ${x2 - t} ${y2} ${x2} ${y2}"/>`)}</svg>
          ${nodes.map((n) => html`<bp-node .node=${n} style="left:${n.x}px;top:${n.y}px;width:${n.w}px;height:${n.h}px"></bp-node>`)}
          <div class="mark">BLUEPRINT</div>
        </div>
        <div class="vignette"></div>
        <div class="crumbs">
          ${icon(18, 25, svg`<path d="M0 0H12V3H4V20L0 23Z" fill="#666"/><path d="M6 4H17V25L11.500 19.500L6 25Z" fill="#c0c0c0"/>`)}
          <span class="s1"></span>${chevron}<span class="s3"></span><span class="bar"></span><span class="s2"></span>
          ${icon(28, 23, svg`<path d="M0 11.500L13 0V7H28V16H13V23Z" fill="#828282"/>`)}<span class="s4"></span>
          ${icon(28, 23, svg`<path d="M28 11.500L15 0V7H0V16H15V23Z" fill="#828282"/>`)}<span class="s5"></span><span class="bar"></span><span class="s6"></span>
          ${graphIcon(34, "#c4c4c4")}<span class="s7"></span>${L("Rogue", 81)}<span class="s8"></span>
          ${icon(16, 26, svg`<path d="M2 2L13 13L2 24" fill="none" stroke="#d8d8d8" stroke-width="3"/>`)}<span class="s9"></span>${L("Event Graph", 152, "last")}
          <span class="zoom">${L("Zoom -3", 107)}</span>
        </div>
      </div>

      <div class="status">
        <div class="cell k1">${folderFind(24, 24)}${L("Content Drawer", 139)}</div>
        <div class="cell k2">${icon(18, 24, svg`<path d="M0 4H18V24H0Z" fill="#c0c0c0"/><path d="M2 0V4M6.500 0V4M11.500 0V4M16 0V4" stroke="#777" stroke-width="1.600"/><path d="M3 10.500L7 14.500L3 18.500M9 19.500H14.500" fill="none" stroke="#242424" stroke-width="1.800"/>`)}${L("Output Log", 99.5)}</div>
        <div class="cell k3">${icon(24, 20, svg`<path d="M1 1H23V19H1Z" fill="none" stroke="#a8a8a8" stroke-width="2"/><path d="M0 0H24V4H0Z" fill="#a8a8a8"/><path d="M4.500 6.500L9.500 10.500L4.500 15M12 15.500H19" fill="none" stroke="#c0c0c0" stroke-width="1.800"/>`)}${L("Cmd", 41)}${chevron}<div class="cmd">${L("Enter Console Command", 230)}</div></div>
        <div class="cell k4"></div>
        <div class="cell k5">${icon(24, 24, svg`<path d="M0 0H16L20 4V20H0Z" fill="#757575"/><path d="M3 0H15V9H3Z" fill="#c6c6c6"/><path d="M12 1.500H13.800V7H12Z" fill="#222"/><path d="M3 13H10V20H3Z" fill="#b0b0b0"/><path d="M9 15.500L15 21L23 12.500" fill="none" stroke="#242424" stroke-width="6"/><path d="M9.500 16L15 21L23 12.500" fill="none" stroke="#c6c6c6" stroke-width="3.400"/>`)}${L("All Saved", 81.5)}</div>
        <div class="cell k6">${icon(21, 24, svg`<path d="M4.500 5V19M4.500 13H11Q16 13 16 5" fill="none" stroke="#8a8a8a" stroke-width="1.700"/><circle cx="4.500" cy="4.500" r="4" fill="#c4c4c4"/><circle cx="16" cy="4.500" r="4" fill="#c4c4c4"/><circle cx="4.500" cy="19.500" r="4" fill="#c4c4c4"/>`)}${L("Revision Control", 145)}${chevron}</div>
      </div>

      <div class="task">
        <div class="apps">
          ${[winIcon, taskView, server, monitor, folder, calc, store, control, gauge].map((i) => html`<span>${i}</span>`)}
          <span></span><span class="run">${steam}</span><span></span><span class="run on">${ueTask}</span><span></span><span class="run stack"></span>
        </div>
        <div class="tray">
          <span class="t1">${icon(19, 12, svg`<path d="M1 10.500L9.500 2L18 10.500" fill="none" stroke="#fff" stroke-width="1.500"/>`)}</span>
          <span class="t2">${icon(25, 20, svg`<path d="M7 2H24V15.500H4V8M9 18.500H18M13.500 15.500V18.500M4 15.500V18.500M1 2H7V8H1ZM4 4V6" fill="none" stroke="#fff" stroke-width="1.300"/>`)}</span>
          <span class="t3">${icon(23, 20, svg`<path d="M1 7H4L9 2V18L4 13H1Z" fill="none" stroke="#fff" stroke-width="1.300"/><path d="M12.500 7.500Q14.500 10 12.500 12.500M15.500 5Q19 10 15.500 15M18.500 2.500Q24 10 18.500 17.500" fill="none" stroke="#fff" stroke-width="1.200"/>`)}</span>
          <span class="t4">${L("ESP", 28)}</span>
          <div class="clock">${L("21:09", 44)}${L("15/08/2025", 93)}</div>
          ${icon(25, 25, svg`<path d="M1 1H24V19H16L12 23.500L8 19H1Z" fill="none" stroke="#fff" stroke-width="1.400"/>`)}
          <div class="edge"></div>
        </div>
      </div>`;
  }
}
